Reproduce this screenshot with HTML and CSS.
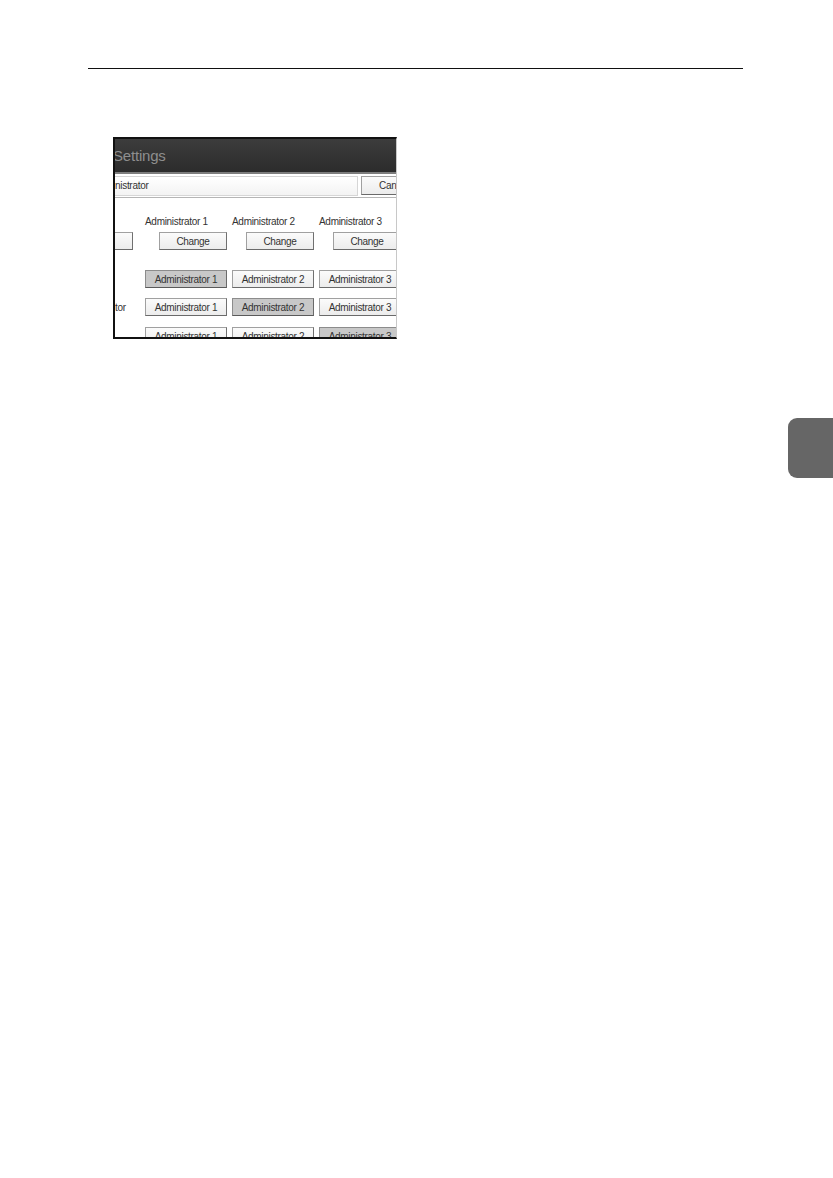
FILE: index.html
```html
<!DOCTYPE html>
<html>
<head>
<meta charset="utf-8">
<link rel="stylesheet" href="styles.css">
</head>
<body>
<div class="page">
  <div class="rule"></div>
  <div class="screen">
    <div class="titlebar"><span class="title">Settings</span></div>
    <div class="band"></div>
    <div class="inforow">
      <div class="field"><span class="fieldtext">nistrator</span></div>
      <div class="btn cancel">Can</div>
    </div>
    <div class="content">
      <div class="grid labels">
        <div class="cell"></div>
        <div class="cell lbl">Administrator 1</div>
        <div class="cell lbl">Administrator 2</div>
        <div class="cell lbl">Administrator 3</div>
      </div>
      <div class="grid changes">
        <div class="cell"><div class="btn stub"></div></div>
        <div class="cell right"><div class="btn change">Change</div></div>
        <div class="cell right"><div class="btn change">Change</div></div>
        <div class="cell right"><div class="btn change">Change</div></div>
      </div>
      <div class="grid adm r1">
        <div class="cell side"></div>
        <div class="btn adm-btn on">Administrator 1</div>
        <div class="btn adm-btn">Administrator 2</div>
        <div class="btn adm-btn">Administrator 3</div>
      </div>
      <div class="grid adm r2">
        <div class="cell side">tor</div>
        <div class="btn adm-btn">Administrator 1</div>
        <div class="btn adm-btn on">Administrator 2</div>
        <div class="btn adm-btn">Administrator 3</div>
      </div>
      <div class="grid adm r3">
        <div class="cell side"></div>
        <div class="btn adm-btn">Administrator 1</div>
        <div class="btn adm-btn">Administrator 2</div>
        <div class="btn adm-btn on">Administrator 3</div>
      </div>
    </div>
  </div>
  <div class="tab"></div>
</div>
</body>
</html>
```
FILE: styles.css
```css
html, body {
  margin: 0;
  padding: 0;
  background: #ffffff;
}
.page {
  position: relative;
  width: 833px;
  height: 1178px;
  overflow: hidden;
}
.rule {
  margin: 68px 0 0 88px;
  width: 655px;
  height: 0;
  border-top: 1px solid #111;
}
.screen {
  margin: 68px 0 0 113px;
  width: 281px;
  height: 198px;
  border-top: 2px solid #111;
  border-left: 2px solid #111;
  border-bottom: 2px solid #111;
  border-right: 1px solid #c8c8c8;
  overflow: hidden;
  font-family: "Liberation Sans", Arial, sans-serif;
  font-size: 10px;
  letter-spacing: -0.3px;
  color: #333;
  background: #fff;
}
.titlebar {
  height: 33px;
  background: linear-gradient(#3c3c3c, #2c2c2c);
  display: flex;
  align-items: center;
}
.title {
  margin-left: -2px;
  font-size: 15px;
  letter-spacing: -0.2px;
  color: #8e8e8e;
}
.band {
  height: 2px;
  background: #7d7d7d;
}
.inforow {
  height: 23px;
  border-bottom: 1px solid #b5b5b5;
  display: flex;
  align-items: center;
}
.field {
  box-sizing: border-box;
  flex-shrink: 0;
  width: 243px;
  height: 20px;
  border: 1px solid #d6d6d6;
  border-left: none;
  background: linear-gradient(#ffffff, #f3f3f3);
  display: flex;
  align-items: center;
}
.fieldtext {
  margin-left: 0;
}
.btn {
  box-sizing: border-box;
  background: linear-gradient(#fbfbfb, #ececec);
  border: 1px solid #a0a0a0;
  border-right-color: #707070;
  border-bottom-color: #6a6a6a;
  display: flex;
  align-items: center;
  justify-content: center;
  white-space: nowrap;
}
.btn.on {
  background: #c8c8c8;
  border-color: #8c8c8c;
  border-right-color: #6a6a6a;
  border-bottom-color: #5a5a5a;
}
.cancel {
  flex-shrink: 0;
  margin-left: 3px;
  width: 40px;
  height: 19px;
  justify-content: flex-start;
  padding-left: 17px;
  border-right: none;
}
.content {
  padding-top: 18px;
}
.grid {
  display: grid;
  grid-template-columns: 25px 82px 82px 82px;
  column-gap: 5px;
}
.labels {
  height: 12px;
  line-height: 12px;
}
.cell {
  white-space: nowrap;
}
.right {
  display: flex;
  justify-content: flex-end;
}
.changes {
  margin-top: 4px;
  height: 18px;
}
.change {
  width: 68px;
  height: 18px;
}
.stub {
  width: 18px;
  height: 18px;
  border-left: none;
}
.adm-btn {
  height: 18px;
}
.side {
  display: flex;
  align-items: center;
}
.r1 { margin-top: 20px; }
.r2 { margin-top: 10px; }
.r3 { margin-top: 11px; }
.tab {
  position: absolute;
  left: 788px;
  top: 418px;
  width: 50px;
  height: 60px;
  border-radius: 9px 0 0 9px;
  background: #666;
}
```
